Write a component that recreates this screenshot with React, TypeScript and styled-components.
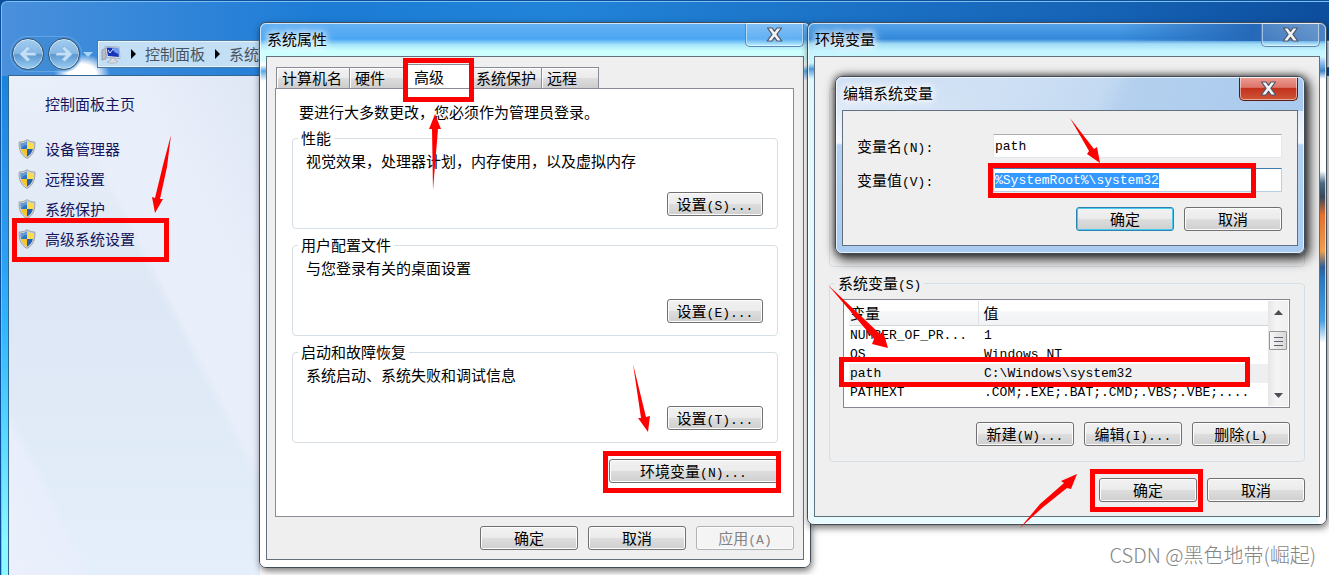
import React, { useEffect, useRef } from "react";
import styled, { createGlobalStyle, css } from "styled-components";

const GlobalStyle = createGlobalStyle`
  * { box-sizing: border-box; }
  body {
    margin: 0;
    font-family: "Noto Sans CJK SC", "Noto Sans", sans-serif;
    font-size: 15px;
    line-height: 20px;
    color: #000;
    background: #fff;
  }
  button, input { font: inherit; color: inherit; }
`;

/* ---------- desktop and explorer window ---------- */

const Desktop = styled.main`
  position: relative;
  display: flex;
  min-height: 100vh;
  overflow: hidden;
  background: #0b4f9c;
  padding: 1px 0 0 1px;
`;

const Explorer = styled.section`
  flex: 1;
  display: flex;
  flex-direction: column;
  border: 1px solid #7cc0f0;
  border-right: 0;
  border-bottom: 0;
  border-radius: 6px 0 0 0;
  background:
    radial-gradient(ellipse 28px 20px at 80px 72px, #fff 50%, #ffffff00 100%),
    linear-gradient(90deg, #4a90dc 0, #1c7cd6 320px, #2183d8 560px, #1663b6 1100px, #0d4e9d 100%) 0 0 / 100% 74px no-repeat,
    linear-gradient(180deg, #1a84dc 74px, #2b9cf0 240px, #2fb4ff 320px, #56d8ff 430px, #8cf8ff 540px);
`;

const NavBar = styled.header`
  display: flex;
  align-items: center;
  height: 73px;
  padding: 31px 0 0 9px;
`;

const NavButtons = styled.div`
  display: flex;
  gap: 4px;
  padding: 1px;
  border-radius: 18px;
  background: #3d8bd099;
  box-shadow: 0 0 0 1px #7db9ea88;
`;

const RoundButton = styled.button`
  width: 32px;
  height: 32px;
  padding: 0;
  border: 1px solid #34536f;
  border-radius: 50%;
  background: linear-gradient(180deg, #a3cdf0 0, #86b7e4 48%, #5b97cf 52%, #9cd0f4 100%);
  box-shadow: inset 0 0 0 1px #ffffff99;
  display: grid;
  place-items: center;
`;

const NavCaret = styled.span`
  margin: 0 5px 0 2px;
  border: 5px solid transparent;
  border-top-color: #a9d4f5;
  border-bottom: 0;
`;

const AddressBar = styled.nav`
  flex: 1;
  display: flex;
  align-items: center;
  gap: 8px;
  height: 26px;
  padding-left: 2px;
  border: 1px solid #e8f4fc;
  outline: 1px solid #4a7ba5;
  background: #c2dff6;
  color: #47535f;
`;

const Crumb = styled.a`
  color: inherit;
  text-decoration: none;
`;

const CrumbArrow = styled.span`
  border: 5px solid transparent;
  border-left-color: #000;
  border-right: 0;
  margin: 0 1px 0 2px;
`;

const ExplorerBody = styled.div`
  flex: 1;
  display: flex;
  margin-left: 6px;
  border: 1px solid #33668f;
  border-right: 0;
  border-bottom: 0;
  background: #fff;
`;

const Sidebar = styled.aside`
  width: 251px;
  padding: 18px 0 0 9px;
  background:
    linear-gradient(63deg, #ebf0fc 0, #e8eefb 15%, #e3edf900 17%),
    linear-gradient(243deg, #dfe6f4 0, #e8eefa 24%, #e8eefa 40%, #dfe8f600 42%),
    linear-gradient(180deg, #eaf0fa 0, #dde7f5 45%, #e4effb 100%);
`;

const TaskLink = styled.a<{ $home?: boolean }>`
  display: flex;
  align-items: center;
  gap: 9px;
  height: 20px;
  margin-bottom: ${(p) => (p.$home ? 25 : 10)}px;
  padding-left: ${(p) => (p.$home ? 27 : 0)}px;
  color: #15155c;
  text-decoration: none;
`;

/* ---------- window frames ---------- */

interface FrameProps {
  $left: number;
  $top: number;
  $width: number;
  $look: "props" | "env" | "edit";
}

const frameLooks = {
  props: css`
    background: linear-gradient(
      180deg, #65b2f4 0, #4ba5f2 16px, #a9e6fb 22px, #ccfffe 28px, #ccfffe 36px,
      #ffffff 42px, #58a9e8 48px, #ffffff 58px);
    box-shadow: 1px 3px 7px #0008;
  `,
  env: css`
    background:
      linear-gradient(180deg, #fff0 0, #fff0 34px, #b9dcfa 36px, #3c82c8 48px, #fff 56px, #fff 148px,
        #4c6c86 160px, #35485c 174px, #e8702c 192px, #f0a050 228px, #2f5e94 244px, #2a78c0 256px,
        #4aa0e0 298px, #fff 320px) right 0 top 0 / 8px 100% no-repeat,
      linear-gradient(90deg, #fff0 0, #fff0 60%, #2568b8 86%, #4d84c2 100%) 0 0 / 100% 18px no-repeat,
      linear-gradient(180deg, #57a4e8 0, #3288da 16px, #a4dcf6 21px, #c4f5ff 28px, #ccf8ff 40px,
        #4b9ae0 46px, #dff8ff 56px, #e8fbff 100%);
    box-shadow: 1px 3px 7px #0008;
  `,
  edit: css`
    background:
      linear-gradient(115deg, #e4eefa00 0, #cfe0f4 34%, #c4daf2 56%, #b4d0ee 62%, #a9caee 100%) 0 0 / 100% 34px no-repeat,
      linear-gradient(180deg, #cfe0f4 0, #f2f7fd 66px, #b4d2f2 68px, #a9ccf0 100%);
    box-shadow: 3px 4px 12px 2px #000b, 0 0 7px #0009;
  `,
};

const WindowFrame = styled.section<FrameProps>`
  position: absolute;
  left: ${(p) => p.$left}px;
  top: ${(p) => p.$top}px;
  width: ${(p) => p.$width}px;
  padding: 0 6px 7px;
  border: 1px solid #414c58;
  border-radius: 7px;
  outline: 1px solid #ffffffb0;
  outline-offset: -2px;
  ${(p) => frameLooks[p.$look]}
`;

const TitleBar = styled.header`
  display: flex;
  justify-content: space-between;
  height: 33px;
`;

const Title = styled.h2`
  margin: 5px 0 0 1px;
  font-size: 15px;
  line-height: 22px;
  font-weight: 400;
  text-shadow: 0 0 6px #fff, 0 0 8px #fff, 0 0 12px #fff;
`;

const CloseButton = styled.button<{ $active?: boolean }>`
  display: grid;
  place-items: center;
  width: 59px;
  height: 24px;
  padding: 0;
  border: 1px solid ${(p) => (p.$active ? "#5c1a14" : "#5b86ad")};
  border-top: 0;
  border-radius: 0 0 5px 5px;
  background: ${(p) =>
    p.$active
      ? "linear-gradient(180deg, #eda097 0, #dd7468 45%, #c3321d 50%, #cf5638 100%)"
      : "linear-gradient(180deg, #ffffff30, #ffffff18)"};
  box-shadow: inset 0 0 0 1px #ffffff80;
`;

const Client = styled.div<{ $pad: string }>`
  padding: ${(p) => p.$pad};
  border: 1px solid #63707c;
  background: #efefef;
`;

/* ---------- controls ---------- */

const Latin = styled.span`
  font-family: "Liberation Mono", monospace;
  font-size: 13px;
  line-height: 1;
`;

const PushButton = styled.button<{ $width?: number; $default?: boolean }>`
  width: ${(p) => p.$width ?? 98}px;
  height: 24px;
  padding: 0;
  line-height: 20px;
  border: 1px solid ${(p) => (p.$default ? "#2a83b0" : "#707070")};
  border-radius: 3px;
  background: linear-gradient(180deg, #f2f2f2 0, #ebebeb 48%, #dddddd 52%, #cfcfcf 100%);
  box-shadow: inset 0 0 0 1px ${(p) => (p.$default ? "#48cbf0" : "#fcfcfc")};
  &:disabled {
    color: #838383;
    border-color: #adb2b5;
    background: #f4f4f4;
  }
`;

const ButtonRow = styled.div<{ $top: number }>`
  display: flex;
  justify-content: flex-end;
  gap: 10px;
  margin-top: ${(p) => p.$top}px;
`;

const Group = styled.fieldset<{ $top: number; $bottom: number }>`
  min-width: 0;
  margin: 6px 0 0;
  padding: ${(p) => p.$top}px 14px ${(p) => p.$bottom}px 5px;
  border: 1px solid #d5dfe5;
  border-radius: 4px;
`;

const Legend = styled.legend`
  height: 20px;
  padding: 0 3px;
  line-height: 20px;
`;

const GroupBody = styled.div`
  padding-left: 8px;
`;

const Text = styled.p`
  margin: 0;
`;

const Intro = styled(Text)`
  padding-left: 7px;
`;

const Tabs = styled.div`
  display: flex;
  align-items: flex-end;
  height: 31px;
  padding-left: 1px;
`;

const Tab = styled.button<{ $width: number; $selected?: boolean }>`
  width: ${(p) => p.$width}px;
  height: ${(p) => (p.$selected ? 24 : 21)}px;
  margin-right: -1px;
  padding: ${(p) => (p.$selected ? "0 0 0 8px" : "0 0 0 5px")};
  text-align: left;
  border: 1px solid #898c95;
  border-bottom: 0;
  background: ${(p) =>
    p.$selected ? "#fff" : "linear-gradient(180deg, #f2f2f2 0, #ebebeb 48%, #dddddd 52%, #cdcdcd 100%)"};
  box-shadow: inset 1px 1px 0 #fff;
  white-space: nowrap;
`;

const TabPanel = styled.div`
  padding: 13px 15px 33px 16px;
  border: 1px solid #898c95;
  background: #fff;
`;

const HiddenGroup = styled.div`
  height: 179px;
  border: 1px solid #d5dfe5;
  border-radius: 4px;
`;

const EnvBody = styled.div`
  padding: 0 14px;
`;

const ListBox = styled.div`
  display: flex;
  min-height: 109px;
  padding: 1px 1px 1px 5px;
  border: 1px solid #828790;
  background: #fff;
`;

const VariableTable = styled.table`
  flex: 1;
  align-self: flex-start;
  table-layout: fixed;
  border-collapse: collapse;
  th, td {
    padding: 0 0 0 6px;
    text-align: left;
    font-weight: 400;
    white-space: nowrap;
    overflow: hidden;
  }
  th {
    height: 24px;
    border-bottom: 1px solid #d5d5d5;
    background: linear-gradient(180deg, #fff 0, #fff 40%, #f5f6f8 45%, #f1f2f4 100%);
  }
  th + th { border-left: 1px solid #e0e2e6; padding-left: 5px; }
  td {
    height: 19px;
    font-family: "Liberation Mono", monospace;
    font-size: 13px;
    line-height: 19px;
  }
  th:first-child, td:first-child { width: 129px; padding-left: 1px; }
`;

const Row = styled.tr<{ $selected?: boolean }>`
  background: ${(p) => (p.$selected ? "#efefef" : "transparent")};
`;

const ScrollBar = styled.div`
  display: flex;
  flex-direction: column;
  align-items: center;
  width: 20px;
  padding: 0 1px;
  background: linear-gradient(90deg, #e6e6e6, #f4f4f4 40%, #f0f0f0);
`;

const ScrollArrow = styled.button<{ $down?: boolean }>`
  display: grid;
  place-items: center;
  width: 18px;
  height: 22px;
  margin-top: ${(p) => (p.$down ? "auto" : "0")};
  padding: 0;
  border: 0;
  background: none;
`;

const ScrollThumb = styled.div`
  display: flex;
  flex-direction: column;
  justify-content: center;
  align-items: center;
  gap: 2px;
  width: 18px;
  height: 19px;
  margin-top: 8px;
  border: 1px solid #969696;
  border-radius: 1px;
  background: linear-gradient(90deg, #f6f6f6, #d8d8d8);
`;

const Grip = styled.span`
  width: 9px;
  height: 2px;
  border-bottom: 1px solid #5c6470;
`;

const Field = styled.div`
  display: flex;
  align-items: center;
  margin-bottom: 10px;
`;

const FieldLabel = styled.label`
  width: 136px;
`;

const TextInput = styled.input<{ $focused?: boolean }>`
  flex: 1;
  min-width: 0;
  height: 24px;
  padding: 0 0 0 1px;
  font-family: "Liberation Mono", monospace;
  font-size: 13px;
  border: 1px solid ${(p) => (p.$focused ? "#b5cfe7" : "#e3e9ef")};
  border-top-color: ${(p) => (p.$focused ? "#3d7bad" : "#abadb3")};
  border-radius: 1px;
  outline: 0;
  background: #fff;
  &::selection { color: #fff; background: #3399ff; }
`;

/* ---------- markup laid over the windows ---------- */

const RedFrame = styled.div<{ $x: number; $y: number; $w: number; $h: number }>`
  position: absolute;
  left: ${(p) => p.$x}px;
  top: ${(p) => p.$y}px;
  width: ${(p) => p.$w}px;
  height: ${(p) => p.$h}px;
  border: 5px solid #f00;
  pointer-events: none;
`;

const ArrowLayer = styled.svg`
  position: absolute;
  left: 0;
  top: 0;
  pointer-events: none;
`;

const Watermark = styled.div`
  position: absolute;
  right: 13px;
  bottom: 6px;
  font-size: 20px;
  line-height: 28px;
  font-weight: 300;
  color: #858585;
`;

/* ---------- drawings ---------- */

const CloseGlyph = () => (
  <svg width="17" height="15" viewBox="0 0 17 15" aria-hidden="true">
    <path
      d="M1.500 1h4.600l2.400 3.300L10.900 1h4.600l-4.600 6.300 4.900 6.700h-4.700L8.500 10.300 5.900 14H1.200l4.900-6.700z"
      fill="#f4f4f4"
      stroke="#4d5668"
      strokeWidth="1.2"
      strokeLinejoin="round"
    />
  </svg>
);

const NavArrow = ({ flip }: { flip?: boolean }) => (
  <svg width="20" height="18" viewBox="0 0 20 18" aria-hidden="true">
    <path
      d="M9.500 1L1.500 9l8 8 2.600-2.600-3.500-3.600H18V7.200H8.600l3.500-3.600z"
      transform={flip ? "matrix(-1 0 0 1 20 0)" : undefined}
      fill="#c4e0f6"
      stroke="#7fb0da"
      strokeWidth=".8"
    />
  </svg>
);

const Shield = () => (
  <svg width="18" height="20" viewBox="0 0 18 20" aria-hidden="true">
    <defs>
      <clipPath id="shieldShape">
        <path d="M9 2.200C7 3.800 4.800 4.300 2.600 4.300 2.300 10 4 15 9 17.800 14 15 15.700 10 15.400 4.300 13.200 4.300 11 3.800 9 2.200z" />
      </clipPath>
    </defs>
    <path
      d="M9 .6C6.800 2.500 4 3 1.200 3 .6 10 2.800 16.400 9 19.400 15.200 16.400 17.400 10 16.800 3 14 3 11.200 2.500 9 .6z"
      fill="#d0d3d6"
      stroke="#8b9197"
      strokeWidth=".8"
    />
    <g clipPath="url(#shieldShape)">
      <path d="M0 0h9v10H0z" fill="#2f74c4" />
      <path d="M9 0h9v10H9z" fill="#fbdc4c" />
      <path d="M0 10h9v10H0z" fill="#f6c52c" />
      <path d="M9 10h9v10H9z" fill="#2560ae" />
      <path d="M2 3h7v3C6 6 4 8 3 10z" fill="#7fb2e6" opacity=".6" />
    </g>
  </svg>
);

const ComputerIcon = () => (
  <svg width="20" height="19" viewBox="0 0 20 19" aria-hidden="true">
    <path d="M1 5l4-2v11l-4 1z" fill="#b9bec6" stroke="#7d838c" strokeWidth=".6" />
    <path d="M4 1.500L18 2l1 11.500-13-1z" fill="#e6eaf0" stroke="#8a93a3" strokeWidth=".6" />
    <path d="M5.500 2.500l11.700.5.700 9-11-.9z" fill="#1734b8" />
    <path d="M11 2.800l6.200.2.500 6c-3-.4-5.400-2.400-6.700-6.200z" fill="#6c9bf0" />
    <path d="M7 5l2 3 3-4" fill="none" stroke="#dfe9ff" strokeWidth="1" />
    <path d="M10 13h4v2l3 1.500-3 1.500H8l-2-1 4-2z" fill="#d9dce0" stroke="#8f959c" strokeWidth=".5" />
  </svg>
);

const ScrollGlyph = ({ down }: { down?: boolean }) => (
  <svg width="9" height="5" viewBox="0 0 9 5" aria-hidden="true">
    <path d={down ? "M0 0h9L4.500 5z" : "M0 5h9L4.500 0z"} fill="#4b4f55" />
  </svg>
);

const arrows = [
  "171,135 167,167 160,199 163,199 155,213 152,197 155,198 163,165",
  "435,114 441,129 438,129 433,190 432,129 429,129",
  "633,364 646,417 650,416 648,432 638,418 641,418",
  "1070,118 1094,149 1097,147 1100,163 1087,154 1089,151",
  "828,285 880,334 883,331 888,348 872,344 874,339",
  "1020,528 1040,504 1064,483 1061,481 1077,474 1071,489 1067,488 1042,508",
];

const tasks = ["设备管理器", "远程设置", "系统保护", "高级系统设置"];

const settingGroups = [
  { title: "性能", text: "视觉效果\uFF0C处理器计划\uFF0C内存使用\uFF0C以及虚拟内存", hotkey: "S" },
  { title: "用户配置文件", text: "与您登录有关的桌面设置", hotkey: "E" },
  { title: "启动和故障恢复", text: "系统启动、系统失败和调试信息", hotkey: "T" },
];

const variables = [
  ["NUMBER_OF_PR...", "1"],
  ["OS", "Windows_NT"],
  ["path", "C:\\Windows\\system32"],
  ["PATHEXT", ".COM;.EXE;.BAT;.CMD;.VBS;.VBE;...."],
];

/* ---------- windows ---------- */

function SystemProperties() {
  return (
    <WindowFrame $left={259} $top={22} $width={552} $look="props">
      <TitleBar>
        <Title>系统属性</Title>
        <CloseButton aria-label="关闭"><CloseGlyph /></CloseButton>
      </TitleBar>
      <Client $pad="0 9px 9px 8px">
        <Tabs role="tablist">
          <Tab role="tab" $width={74}>计算机名</Tab>
          <Tab role="tab" $width={57}>硬件</Tab>
          <Tab role="tab" $width={66} $selected aria-selected>高级</Tab>
          <Tab role="tab" $width={72}>系统保护</Tab>
          <Tab role="tab" $width={58}>远程</Tab>
        </Tabs>
        <TabPanel role="tabpanel">
          <Intro>{"要进行大多数更改\uFF0C您必须作为管理员登录。"}</Intro>
          {settingGroups.map((g) => (
            <Group key={g.title} $top={3} $bottom={12}>
              <Legend>{g.title}</Legend>
              <GroupBody>
                <Text>{g.text}</Text>
                <ButtonRow $top={21}>
                  <PushButton $width={96}>设置<Latin>({g.hotkey})...</Latin></PushButton>
                </ButtonRow>
              </GroupBody>
            </Group>
          ))}
          <ButtonRow $top={16}>
            <PushButton $width={169}>环境变量<Latin>(N)...</Latin></PushButton>
          </ButtonRow>
        </TabPanel>
        <ButtonRow $top={9}>
          <PushButton>确定</PushButton>
          <PushButton>取消</PushButton>
          <PushButton disabled>应用<Latin>(A)</Latin></PushButton>
        </ButtonRow>
      </Client>
    </WindowFrame>
  );
}

function EnvironmentVariables() {
  return (
    <WindowFrame $left={807} $top={22} $width={520} $look="env">
      <TitleBar>
        <Title>环境变量</Title>
        <CloseButton aria-label="关闭"><CloseGlyph /></CloseButton>
      </TitleBar>
      <Client $pad="31px 0 14px 0">
        <EnvBody>
          <HiddenGroup />
          <Group $top={6} $bottom={15}>
            <Legend>系统变量<Latin>(S)</Latin></Legend>
            <GroupBody>
              <ListBox>
                <VariableTable>
                  <thead>
                    <tr><th>变量</th><th>值</th></tr>
                  </thead>
                  <tbody>
                    {variables.map(([name, value]) => (
                      <Row key={name} $selected={name === "path"}>
                        <td>{name}</td>
                        <td>{value}</td>
                      </Row>
                    ))}
                  </tbody>
                </VariableTable>
                <ScrollBar>
                  <ScrollArrow aria-label="向上滚动"><ScrollGlyph /></ScrollArrow>
                  <ScrollThumb><Grip /><Grip /><Grip /></ScrollThumb>
                  <ScrollArrow $down aria-label="向下滚动"><ScrollGlyph down /></ScrollArrow>
                </ScrollBar>
              </ListBox>
              <ButtonRow $top={14}>
                <PushButton>新建<Latin>(W)...</Latin></PushButton>
                <PushButton>编辑<Latin>(I)...</Latin></PushButton>
                <PushButton>删除<Latin>(L)</Latin></PushButton>
              </ButtonRow>
            </GroupBody>
          </Group>
          <ButtonRow $top={16}>
            <PushButton>确定</PushButton>
            <PushButton>取消</PushButton>
          </ButtonRow>
        </EnvBody>
      </Client>
    </WindowFrame>
  );
}

function EditVariable() {
  const valueRef = useRef<HTMLInputElement>(null);
  useEffect(() => {
    valueRef.current?.focus();
    valueRef.current?.select();
  }, []);
  return (
    <WindowFrame $left={835} $top={76} $width={470} $look="edit">
      <TitleBar>
        <Title>编辑系统变量</Title>
        <CloseButton $active aria-label="关闭"><CloseGlyph /></CloseButton>
      </TitleBar>
      <Client $pad="23px 15px 14px 14px">
        <Field>
          <FieldLabel htmlFor="variable-name">变量名<Latin>(N):</Latin></FieldLabel>
          <TextInput id="variable-name" defaultValue="path" />
        </Field>
        <Field>
          <FieldLabel htmlFor="variable-value">变量值<Latin>(V):</Latin></FieldLabel>
          <TextInput id="variable-value" ref={valueRef} $focused defaultValue="%SystemRoot%\system32" />
        </Field>
        <ButtonRow $top={15}>
          <PushButton $default>确定</PushButton>
          <PushButton>取消</PushButton>
        </ButtonRow>
      </Client>
    </WindowFrame>
  );
}

export default function App() {
  return (
    <>
      <GlobalStyle />
      <Desktop>
        <Explorer>
          <NavBar>
            <NavButtons>
              <RoundButton aria-label="后退"><NavArrow /></RoundButton>
              <RoundButton aria-label="前进"><NavArrow flip /></RoundButton>
            </NavButtons>
            <NavCaret />
            <AddressBar>
              <ComputerIcon />
              <CrumbArrow />
              <Crumb href="#">控制面板</Crumb>
              <CrumbArrow />
              <Crumb href="#">系统</Crumb>
            </AddressBar>
          </NavBar>
          <ExplorerBody>
            <Sidebar>
              <TaskLink href="#" $home>控制面板主页</TaskLink>
              {tasks.map((t) => (
                <TaskLink href="#" key={t}><Shield />{t}</TaskLink>
              ))}
            </Sidebar>
          </ExplorerBody>
        </Explorer>

        <SystemProperties />
        <EnvironmentVariables />
        <EditVariable />

        <RedFrame $x={12} $y={218} $w={157} $h={44} />
        <RedFrame $x={403} $y={58} $w={71} $h={44} />
        <RedFrame $x={603} $y={451} $w={178} $h={42} />
        <RedFrame $x={988} $y={163} $w={268} $h={35} />
        <RedFrame $x={839} $y={357} $w={411} $h={30} />
        <RedFrame $x={1090} $y={469} $w={113} $h={43} />
        <ArrowLayer width="1329" height="575" viewBox="0 0 1329 575" aria-hidden="true">
          {arrows.map((points) => (
            <polygon key={points} points={points} fill="#f00" />
          ))}
        </ArrowLayer>
        <Watermark>CSDN @黑色地带(崛起)</Watermark>
      </Desktop>
    </>
  );
}
